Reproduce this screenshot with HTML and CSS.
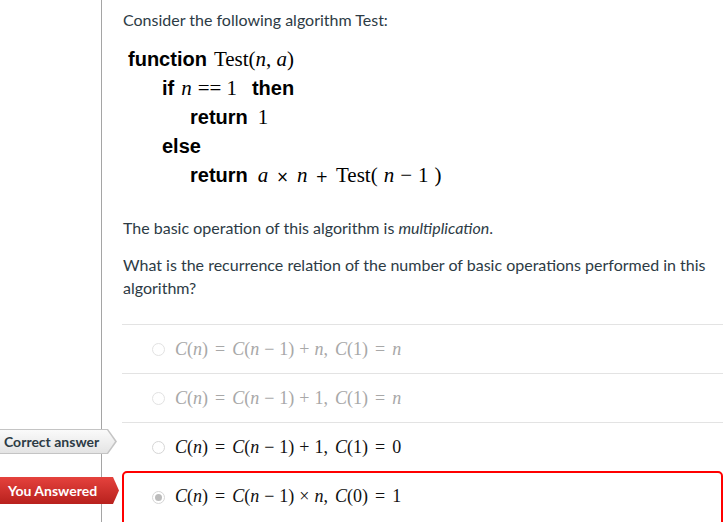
FILE: index.html
```html
<!DOCTYPE html>
<html>
<head>
<meta charset="utf-8">
<link rel="stylesheet" href="styles.css">
</head>
<body>
<div class="page">
  <div class="gutter"></div>
  <div class="question">
    <p class="intro">Consider the following algorithm Test:</p>
    <div class="algo">
      <div class="line"><b>function</b><span class="tm g">Test(<i>n</i>, <i>a</i>)</span></div>
      <div class="line ind1"><b>if</b><span class="tm g"><i>n</i><span class="eq">==</span>1</span><b class="g3">then</b></div>
      <div class="line ind2"><b>return</b><span class="tm g2">1</span></div>
      <div class="line ind1"><b>else</b></div>
      <div class="line ind2"><b>return</b><span class="tm g2"><i>a</i><span class="sym">×</span><i>n</i><span class="sym">+</span>Test(<span class="s4"></span><i>n</i><span class="mn">−</span>1<span class="s4"></span>)</span></div>
    </div>
    <p class="para p1">The basic operation of this algorithm is <em>multiplication</em>.</p>
    <p class="para p2">What is the recurrence relation of the number of basic operations performed in this algorithm?</p>
    <div class="answers">
      <div class="answer dim">
        <span class="radio"></span>
        <span class="math"><i>C</i>(<i>n</i>)<span class="rel">=</span><i>C</i>(<i>n</i><span class="bin">−</span>1)<span class="bin">+</span><i>n</i>,<span class="sp"></span><i>C</i>(1)<span class="rel">=</span><i>n</i></span>
      </div>
      <div class="answer dim">
        <span class="radio"></span>
        <span class="math"><i>C</i>(<i>n</i>)<span class="rel">=</span><i>C</i>(<i>n</i><span class="bin">−</span>1)<span class="bin">+</span>1,<span class="sp"></span><i>C</i>(1)<span class="rel">=</span><i>n</i></span>
      </div>
      <div class="answer">
        <span class="tag tag-correct"><span class="tag-in">Correct answer</span></span>
        <span class="radio"></span>
        <span class="math"><i>C</i>(<i>n</i>)<span class="rel">=</span><i>C</i>(<i>n</i><span class="bin">−</span>1)<span class="bin">+</span>1,<span class="sp"></span><i>C</i>(1)<span class="rel">=</span>0</span>
      </div>
      <div class="answer chosen">
        <span class="tag tag-you"><span class="tag-in">You Answered</span></span>
        <span class="radio checked"></span>
        <span class="math"><i>C</i>(<i>n</i>)<span class="rel">=</span><i>C</i>(<i>n</i><span class="bin">−</span>1)<span class="bin">×</span><i>n</i>,<span class="sp"></span><i>C</i>(0)<span class="rel">=</span>1</span>
      </div>
    </div>
  </div>
</div>
</body>
</html>
```
FILE: styles.css
```css
html, body {
  margin: 0;
  padding: 0;
  background: #fff;
}
body {
  font-family: Lato, "Open Sans", sans-serif;
  color: #2d3b45;
  overflow: hidden;
}
.page {
  display: flex;
  height: 522px;
  overflow: hidden;
}
.gutter {
  width: 101px;
  flex: none;
  border-right: 1px solid #a5a5a5;
}
.question {
  flex: 1;
  padding-left: 20px;
  min-width: 0;
}
.intro {
  margin: 9px 0 0 1px;
  font-size: 16px;
  line-height: 22px;
}
.algo {
  margin: 14px 0 0 6px;
  color: #000;
}
.line {
  height: 29px;
  line-height: 29px;
  white-space: nowrap;
}
.line b {
  font-family: "Liberation Sans", Arial, sans-serif;
  font-weight: 700;
  font-size: 20px;
}
.tm {
  font-family: "Liberation Serif", "Times New Roman", serif;
  font-size: 21px;
}
.tm i { font-style: italic; }
.g { margin-left: 7px; }
.g2 { margin-left: 10px; }
.line b.g3 { margin-left: 15px; }
.eq { margin: 0 5px 0 6px; }
.tm .sym { font-family: "DejaVu Sans", sans-serif; font-size: 15px; margin: 0 8px; }
.mn { margin: 0 6px; }
.s4 { display: inline-block; width: 6px; }
.ind1 { padding-left: 34px; }
.ind2 { padding-left: 62px; }
.para {
  margin: 0 0 0 1px;
  font-size: 16px;
  line-height: 23px;
}
.p1 { margin-top: 26px; }
.p2 { margin-top: 14px; }
.answers {
  margin-top: 25px;
}
.answer {
  position: relative;
  height: 48px;
  border-top: 1px solid #e3e3e3;
  display: flex;
  align-items: center;
  padding-left: 30px;
}
.answer.chosen {
  border: 2px solid #f00;
  border-radius: 5px;
  height: 60px;
  padding-left: 28px;
  align-items: flex-start;
}
.answer.chosen .radio { margin-top: 18px; }
.answer.chosen .math { margin-top: 13px; }
.radio {
  width: 11px;
  height: 11px;
  border-radius: 50%;
  border: 1px solid #d6d6d6;
  background: #fff;
  flex: none;
  margin-right: 10px;
  box-sizing: content-box;
  position: relative;
}
.radio.checked::after {
  content: "";
  position: absolute;
  left: 2px;
  top: 2px;
  width: 7px;
  height: 7px;
  border-radius: 50%;
  background: #bcbcbc;
}
.math {
  font-family: "Liberation Serif", "Times New Roman", serif;
  font-size: 18px;
  color: #111;
  white-space: nowrap;
}
.dim .math { color: #a8a8a8; }
.dim .radio { border-color: #e2e2e2; }
.math i { font-style: italic; }
.rel { margin: 0 7px; }
.bin { margin: 0 5px; }
.sp { display: inline-block; width: 7px; }
.tag {
  position: absolute;
  left: -122px;
  font-family: Lato, sans-serif;
  font-weight: 700;
  font-size: 14px;
  white-space: nowrap;
}
.tag-correct {
  top: 6px;
  width: 117px;
  height: 25px;
  background: #c4c4c4;
  clip-path: polygon(0 0, 108px 0, 117px 50%, 108px 100%, 0 100%);
}
.tag-correct .tag-in {
  position: absolute;
  left: 0;
  top: 1px;
  width: 115px;
  height: 23px;
  line-height: 23px;
  padding-left: 4px;
  box-sizing: border-box;
  color: #2d3b45;
  background: linear-gradient(#fafafa, #e4e4e4);
  clip-path: polygon(0 0, 107px 0, 115px 50%, 107px 100%, 0 100%);
}
.tag-you {
  left: -124px;
  top: 4px;
  width: 119px;
  height: 27px;
  line-height: 27px;
  padding-left: 8px;
  box-sizing: border-box;
  color: #fff;
  background: linear-gradient(#e5423d, #b8211d);
  clip-path: polygon(0 0, 113px 0, 119px 50%, 113px 100%, 0 100%);
}
```
